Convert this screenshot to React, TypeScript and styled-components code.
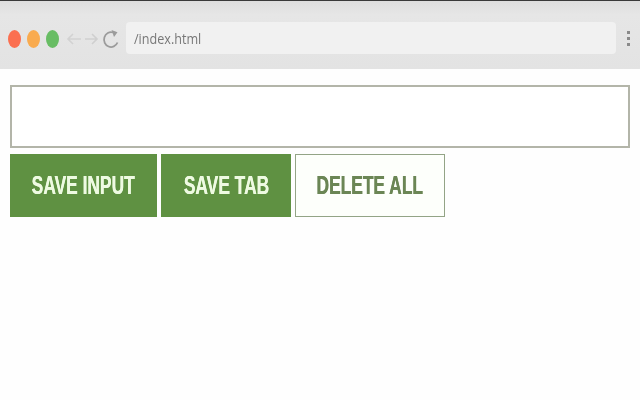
import React from "react";
import styled, { createGlobalStyle } from "styled-components";

const Global = createGlobalStyle`
  html, body { margin: 0; padding: 0; background: #fefefe; }
  body { width: 640px; height: 400px; overflow: hidden; font-family: "Liberation Sans", Arial, sans-serif; }
`;

const Page = styled.div`
  width: 640px;
  height: 400px;
  display: flex;
  flex-direction: column;
`;

const BrowserBar = styled.header`
  height: 69px;
  box-sizing: border-box;
  border-top: 1px solid #3a3a3a;
  background: linear-gradient(#dedede, #e6e6e6 20%, #e3e3e3);
  display: flex;
  align-items: center;
  padding: 8px 9px 0 8px;
`;

const Dots = styled.div`
  display: flex;
  gap: 6px;
  filter: blur(0.6px);
`;

const Dot = styled.span<{ $color: string }>`
  width: 13px;
  height: 18px;
  border-radius: 50%;
  background: ${(p) => p.$color};
`;

const NavIcons = styled.svg`
  width: 62px;
  height: 24px;
  margin-left: 6px;
  flex: none;
  filter: blur(0.6px);
`;

const Address = styled.div`
  flex: 1;
  height: 32px;
  margin: -2px 0 0 -1px;
  background: #f1f1f1;
  border-radius: 4px;
  display: flex;
  align-items: center;
  padding-left: 8px;
  color: #777;
  font-family: "Open Sans", sans-serif;
  font-size: 14px;
  filter: blur(0.5px);
`;

const AddressText = styled.span`
  display: inline-block;
  transform: scaleX(0.9);
  transform-origin: left center;
`;

const Kebab = styled.div`
  width: 4px;
  margin: -2px 0 0 11px;
  display: flex;
  flex-direction: column;
  gap: 3px;
  filter: blur(0.5px);
`;

const KebabDot = styled.span`
  width: 3px;
  height: 3px;
  background: #8a8a8a;
`;

const Content = styled.main`
  padding: 16px 10px 0;
  display: flex;
  flex-direction: column;
  gap: 6px;
`;

const Field = styled.div`
  height: 63px;
  box-sizing: border-box;
  border: 2px solid #b3b5a9;
  background: #fff;
`;

const Buttons = styled.div`
  display: flex;
  gap: 4px;
`;

const Button = styled.button<{ $w: number; $outline?: boolean }>`
  width: ${(p) => p.$w}px;
  height: 63px;
  box-sizing: border-box;
  padding: 0;
  border: 1px solid ${(p) => (p.$outline ? "#93a486" : "#5f9142")};
  background: ${(p) => (p.$outline ? "#fdfffb" : "#5f9142")};
  color: ${(p) => (p.$outline ? "#6b8655" : "#eefae2")};
  font-family: "Liberation Sans", Arial, sans-serif;
  font-weight: 700;
  font-size: 25px;
  display: flex;
  align-items: center;
  justify-content: center;
`;

const Label = styled.span`
  display: inline-block;
  white-space: nowrap;
  transform: scaleX(0.695);
  text-shadow: 0.4px 0 0 currentColor;
  filter: blur(0.5px);
`;

export default function App() {
  return (
    <Page>
      <Global />
      <BrowserBar>
        <Dots>
          <Dot $color="#fb6f50" />
          <Dot $color="#f9ab4f" />
          <Dot $color="#68bd64" />
        </Dots>
        <NavIcons viewBox="0 0 62 24" fill="none">
          <path d="M16 12H3M8 7l-5 5 5 5" stroke="#d2d2d2" strokeWidth="1.6" />
          <path d="M20 12h12M27 7l5 5-5 5" stroke="#cfcfcf" strokeWidth="1.6" />
          <path d="M48 5.5a7 7.4 0 1 0 4.5 10" stroke="#9b9b9b" strokeWidth="1.8" />
          <path d="M46.5 3l6 2.2-3.5 4.8z" fill="#9b9b9b" />
        </NavIcons>
        <Address>
          <AddressText>/index.html</AddressText>
        </Address>
        <Kebab>
          <KebabDot />
          <KebabDot />
          <KebabDot />
        </Kebab>
      </BrowserBar>
      <Content>
        <Field />
        <Buttons>
          <Button $w={147}><Label>SAVE INPUT</Label></Button>
          <Button $w={130}><Label>SAVE TAB</Label></Button>
          <Button $w={150} $outline><Label>DELETE ALL</Label></Button>
        </Buttons>
      </Content>
    </Page>
  );
}
